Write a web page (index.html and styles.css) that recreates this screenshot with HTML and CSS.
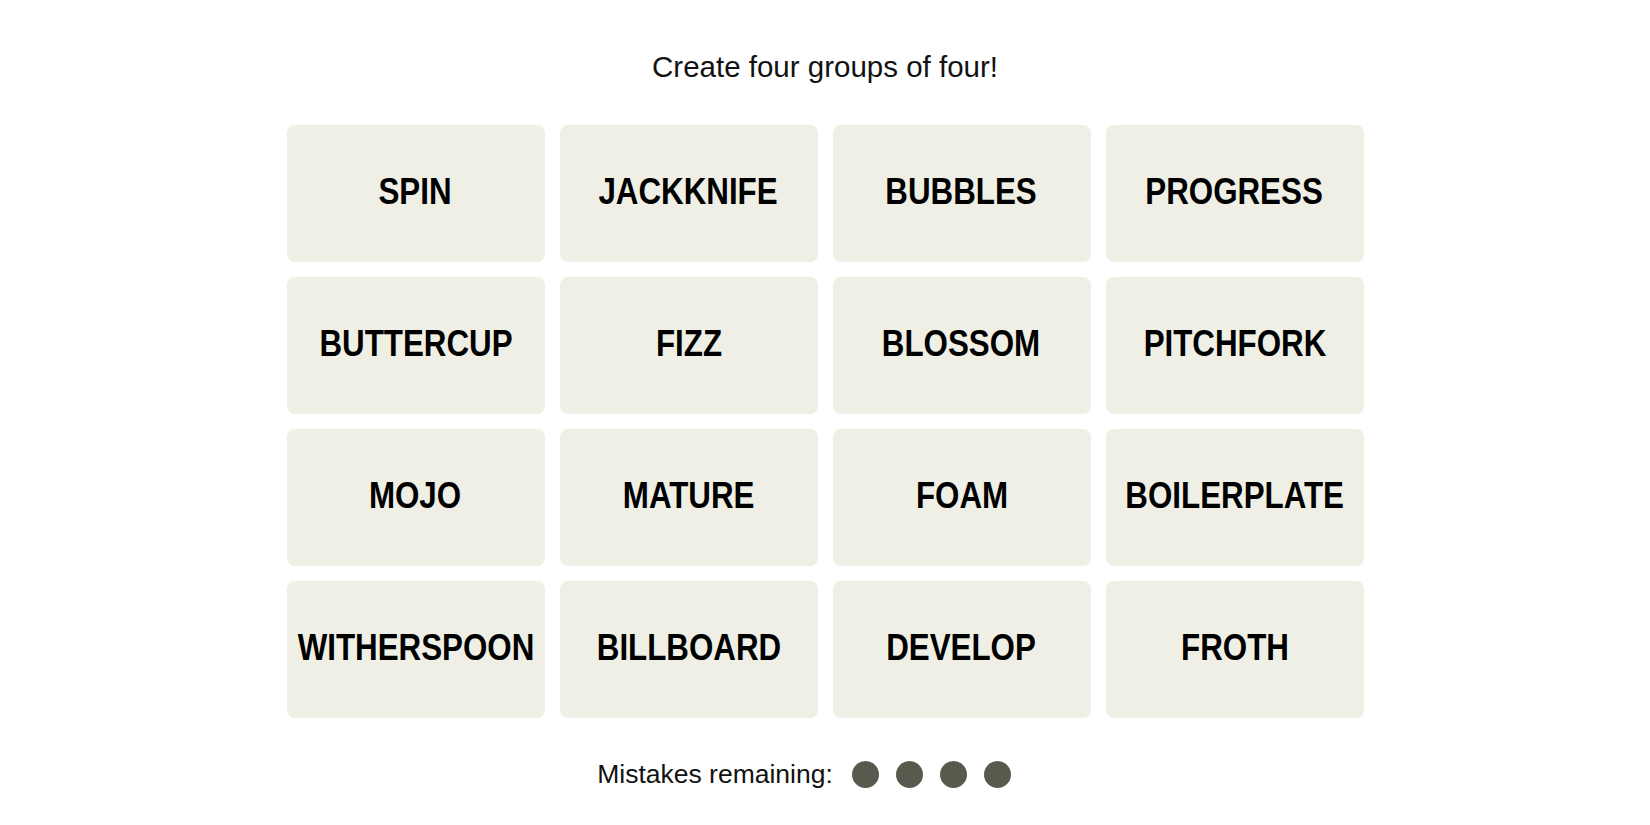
FILE: index.html
```html
<!DOCTYPE html>
<html lang="en">
<head>
<meta charset="utf-8">
<title>Connections</title>
<link rel="stylesheet" href="styles.css">
</head>
<body>
<main class="game">
  <p class="prompt">Create four groups of four!</p>
  <section class="board">
    <button class="tile"><span class="word">SPIN</span></button>
    <button class="tile"><span class="word">JACKKNIFE</span></button>
    <button class="tile"><span class="word">BUBBLES</span></button>
    <button class="tile"><span class="word">PROGRESS</span></button>
    <button class="tile"><span class="word">BUTTERCUP</span></button>
    <button class="tile"><span class="word">FIZZ</span></button>
    <button class="tile"><span class="word">BLOSSOM</span></button>
    <button class="tile"><span class="word">PITCHFORK</span></button>
    <button class="tile"><span class="word">MOJO</span></button>
    <button class="tile"><span class="word">MATURE</span></button>
    <button class="tile"><span class="word">FOAM</span></button>
    <button class="tile"><span class="word">BOILERPLATE</span></button>
    <button class="tile"><span class="word">WITHERSPOON</span></button>
    <button class="tile"><span class="word">BILLBOARD</span></button>
    <button class="tile"><span class="word">DEVELOP</span></button>
    <button class="tile"><span class="word">FROTH</span></button>
  </section>
  <div class="mistakes">
    <span class="mistakes-label">Mistakes remaining:</span>
    <span class="dots">
      <span class="dot"></span>
      <span class="dot"></span>
      <span class="dot"></span>
      <span class="dot"></span>
    </span>
  </div>
</main>
</body>
</html>
```

FILE: styles.css
```css
html, body {
  margin: 0;
  padding: 0;
  background: #ffffff;
}

.game {
  display: flex;
  flex-direction: column;
  align-items: center;
  padding-top: 48px;
}

.prompt {
  margin: 0;
  font-family: "Liberation Sans", Arial, sans-serif;
  font-size: 29.5px;
  line-height: 38px;
  color: #121212;
}

.board {
  margin-top: 39px;
  display: grid;
  grid-template-columns: repeat(4, 258px);
  grid-auto-rows: 137px;
  gap: 15px;
}

.tile {
  border: 0;
  margin: 0;
  padding: 0 0 4px 0;
  background: #efefe6;
  border-radius: 8px;
  display: flex;
  align-items: center;
  justify-content: center;
  font-family: "Liberation Sans", Arial, sans-serif;
  font-weight: 700;
  font-size: 36px;
  color: #000000;
  cursor: pointer;
  overflow: visible;
}

.word {
  display: inline-block;
  white-space: nowrap;
  transform: scaleX(0.87);
  transform-origin: center;
}

.mistakes {
  margin-top: 41px;
  margin-right: 42px;
  height: 30px;
  display: flex;
  align-items: center;
  gap: 19px;
}

.mistakes-label {
  font-family: "Liberation Sans", Arial, sans-serif;
  font-size: 26.5px;
  line-height: 30px;
  color: #121212;
}

.dots {
  display: flex;
  gap: 17px;
}

.dot {
  width: 27px;
  height: 27px;
  border-radius: 50%;
  background: #5a594e;
}
```
